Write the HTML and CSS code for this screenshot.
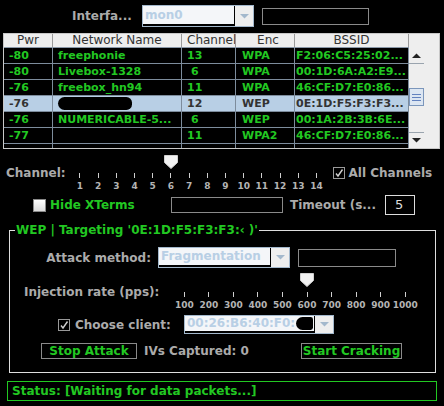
FILE: index.html
```html
<!DOCTYPE html>
<html>
<head>
<meta charset="utf-8">
<link rel="stylesheet" href="styles.css">
</head>
<body>
<div class="top">
  <span class="lbl-if">Interfa...</span>
  <div class="combo combo-if"><span class="editor">mon0</span><span class="arrow"><svg width="9" height="5" viewBox="0 0 9 5"><polygon points="0,0 9,0 4.5,4.5" fill="#a3b8cc"/></svg></span></div>
  <span class="field field-if"></span>
</div>

<div class="table">
  <div class="grid">
    <div class="head">
      <span class="h c1">Pwr</span><span class="h c2">Network Name</span><span class="h c3">Channel</span><span class="h c4">Enc</span><span class="h c5">BSSID</span>
    </div>
    <div class="body">
      <div class="row"><span class="c c1">-80</span><span class="c c2">freephonie</span><span class="c c3">13</span><span class="c c4">WPA</span><span class="c c5 mac">F2:06:C5:25:02...</span></div>
      <div class="row"><span class="c c1">-80</span><span class="c c2">Livebox-1328</span><span class="c c3 one">6</span><span class="c c4">WPA</span><span class="c c5 mac">00:1D:6A:A2:E9...</span></div>
      <div class="row"><span class="c c1">-76</span><span class="c c2">freebox_hn94</span><span class="c c3">11</span><span class="c c4">WPA</span><span class="c c5 mac">46:CF:D7:E0:86...</span></div>
      <div class="row sel"><span class="c c1">-76</span><span class="c c2"><span class="blob"></span></span><span class="c c3">12</span><span class="c c4">WEP</span><span class="c c5 mac">0E:1D:F5:F3:F3...</span></div>
      <div class="row"><span class="c c1">-76</span><span class="c c2">NUMERICABLE-5...</span><span class="c c3 one">6</span><span class="c c4">WEP</span><span class="c c5 mac">00:1A:2B:3B:6E...</span></div>
      <div class="row"><span class="c c1">-77</span><span class="c c2"></span><span class="c c3">11</span><span class="c c4">WPA2</span><span class="c c5 mac">46:CF:D7:E0:86...</span></div>
      <div class="row"><span class="c c1"></span><span class="c c2"></span><span class="c c3"></span><span class="c c4"></span><span class="c c5"></span></div>
    </div>
  </div>
  <div class="sbcol">
    <div class="sbhead"></div>
    <div class="sb">
      <div class="sb-up"><svg width="9" height="5" viewBox="0 0 9 5"><polygon points="0,5 9,5 4.5,0.5" fill="#222"/></svg></div>
      <div class="sb-track"><div class="sb-thumb"><i></i><i></i><i></i></div></div>
      <div class="sb-down"><svg width="9" height="5" viewBox="0 0 9 5"><polygon points="0,0 9,0 4.5,4.5" fill="#222"/></svg></div>
    </div>
  </div>
</div>

<div class="chan">
  <span class="chan-lbl">Channel:</span>
  <div class="slider s1">
    <div class="tk"><span class="slot"></span><span class="tick"></span><span class="tl">1</span></div>
    <div class="tk"><span class="slot"></span><span class="tick"></span><span class="tl">2</span></div>
    <div class="tk"><span class="slot"></span><span class="tick"></span><span class="tl">3</span></div>
    <div class="tk"><span class="slot"></span><span class="tick"></span><span class="tl">4</span></div>
    <div class="tk"><span class="slot"></span><span class="tick"></span><span class="tl">5</span></div>
    <div class="tk"><span class="slot"><svg class="thumb" width="14" height="14" viewBox="0 0 14 14"><polygon points="0.5,0.5 13.5,0.5 13.5,7.5 7,13.5 0.5,7.5" fill="#f2f2f2" stroke="#d0d0d0"/></svg></span><span class="tick"></span><span class="tl">6</span></div>
    <div class="tk"><span class="slot"></span><span class="tick"></span><span class="tl">7</span></div>
    <div class="tk"><span class="slot"></span><span class="tick"></span><span class="tl">8</span></div>
    <div class="tk"><span class="slot"></span><span class="tick"></span><span class="tl">9</span></div>
    <div class="tk"><span class="slot"></span><span class="tick"></span><span class="tl">10</span></div>
    <div class="tk"><span class="slot"></span><span class="tick"></span><span class="tl">11</span></div>
    <div class="tk"><span class="slot"></span><span class="tick"></span><span class="tl">12</span></div>
    <div class="tk"><span class="slot"></span><span class="tick"></span><span class="tl">13</span></div>
    <div class="tk"><span class="slot"></span><span class="tick"></span><span class="tl">14</span></div>
  </div>
  <div class="allch">
    <svg class="cb" width="12" height="12" viewBox="0 0 12 12"><rect x="0.5" y="0.5" width="11" height="11" fill="#000" stroke="#999"/><path d="M3 6.5 L5 9 L9.5 2.5" fill="none" stroke="#cfcfcf" stroke-width="1.4"/></svg>
    <span class="allch-lbl">All Channels</span>
  </div>
</div>

<div class="hide">
  <span class="cb-hide"></span>
  <span class="lbl-hide">Hide XTerms</span>
  <span class="field field-hide"></span>
  <span class="lbl-to">Timeout (s...</span>
  <span class="field field-to">5</span>
</div>

<fieldset class="wep">
  <legend class="legend">WEP | Targeting '0E:1D:F5:F3:F3:‹ )'</legend>
  <div class="am">
    <span class="lbl-am">Attack method:</span>
    <div class="combo combo-am"><span class="editor">Fragmentation</span><span class="arrow"><svg width="9" height="5" viewBox="0 0 9 5"><polygon points="0,0 9,0 4.5,4.5" fill="#a3b8cc"/></svg></span></div>
    <span class="field field-am"></span>
  </div>
  <div class="ir">
    <span class="lbl-ir">Injection rate (pps):</span>
    <div class="slider s2">
      <div class="tk"><span class="slot"></span><span class="tick"></span><span class="tl">100</span></div>
      <div class="tk"><span class="slot"></span><span class="tick"></span><span class="tl">200</span></div>
      <div class="tk"><span class="slot"></span><span class="tick"></span><span class="tl">300</span></div>
      <div class="tk"><span class="slot"></span><span class="tick"></span><span class="tl">400</span></div>
      <div class="tk"><span class="slot"></span><span class="tick"></span><span class="tl">500</span></div>
      <div class="tk"><span class="slot"><svg class="thumb" width="14" height="14" viewBox="0 0 14 14"><polygon points="0.5,0.5 13.5,0.5 13.5,7.5 7,13.5 0.5,7.5" fill="#f2f2f2" stroke="#d0d0d0"/></svg></span><span class="tick"></span><span class="tl">600</span></div>
      <div class="tk"><span class="slot"></span><span class="tick"></span><span class="tl">700</span></div>
      <div class="tk"><span class="slot"></span><span class="tick"></span><span class="tl">800</span></div>
      <div class="tk"><span class="slot"></span><span class="tick"></span><span class="tl">900</span></div>
      <div class="tk"><span class="slot"></span><span class="tick"></span><span class="tl">1000</span></div>
    </div>
  </div>
  <div class="cc">
    <svg class="cb cb-client" width="12" height="12" viewBox="0 0 12 12"><rect x="0.5" y="0.5" width="11" height="11" fill="#000" stroke="#999"/><path d="M3 6.5 L5 9 L9.5 2.5" fill="none" stroke="#cfcfcf" stroke-width="1.4"/></svg>
    <span class="lbl-cc">Choose client:</span>
    <div class="combo combo-cc"><span class="editor">00:26:B6:40:F0:<span class="blob2"></span></span><span class="arrow"><svg width="9" height="5" viewBox="0 0 9 5"><polygon points="0,0 9,0 4.5,4.5" fill="#a3b8cc"/></svg></span></div>
  </div>
  <div class="btns">
    <span class="btn btn-stop">Stop Attack</span>
    <span class="lbl-iv">IVs Captured: 0</span>
    <span class="btn btn-start">Start Cracking</span>
  </div>
</fieldset>

<div class="status">Status: [Waiting for data packets...]</div>
</body>
</html>
```

FILE: styles.css
```css
* { box-sizing: border-box; }
body {
  margin: 0;
  width: 444px;
  height: 406px;
  overflow: hidden;
  background: #000;
  font-family: "DejaVu Sans", sans-serif;
  font-weight: bold;
  font-size: 12px;
  color: #ababab;
}

/* top row */
.top { display: flex; align-items: center; height: 22px; margin-top: 5px; }
.lbl-if { margin-left: 72px; width: 70px; line-height: 14px; white-space: nowrap; }
.combo { display: flex; border: 1px solid #a3b8cc; background: #eeeeee; }
.combo-if { width: 112px; height: 22px; }
.editor {
  flex: 1;
  background: #f4f6f9;
  color: #b8cfe5;
  border-bottom: 2px solid #000;
  border-right: 1px solid #000;
  padding-left: 2px;
  line-height: 17px;
  white-space: nowrap;
  overflow: hidden;
  display: flex;
  align-items: center;
}
.arrow { width: 18px; display: flex; align-items: center; justify-content: center; }
.field { display: block; border: 1px solid #8a8a8a; background: #000; }
.field-if { margin-left: 8px; width: 107px; height: 17px; }

/* table */
.table { display: flex; margin: 6px 0 0 3px; width: 437px; height: 116px; border: 1px solid #c8c8c8; }
.grid { width: 405px; overflow: hidden; }
.head { display: flex; height: 14px; background: #eeeeee; border-bottom: 1px solid #8a98a8; }
.h {
  display: block;
  border-right: 1px solid #9a9a9a;
  text-align: center;
  font-weight: normal;
  font-size: 12px;
  color: #333;
  line-height: 13px;
  white-space: nowrap;
  overflow: hidden;
}
.c1 { width: 49px; }
.c2 { width: 129px; }
.c3 { width: 54px; }
.c4 { width: 59px; }
.c5 { width: 114px; }
.body { height: 100px; overflow: hidden; }
.row { display: flex; height: 16px; border-bottom: 1px solid #7d8c9c; }
.c {
  display: flex;
  align-items: center;
  border-right: 1px solid #7d8c9c;
  font-size: 11px;
  color: #22c822;
  line-height: 15px;
  white-space: nowrap;
  overflow: hidden;
  padding-left: 5px;
}
.c3 { padding-left: 5px; }
.c3.one { padding-left: 9px; }
.c4 { padding-left: 6px; }
.c5.mac { padding-left: 1px; }
.sel { background: #b8cfe5; }
.sel .c { color: #333; }
.blob { display: block; width: 74px; height: 13px; border-radius: 7px 6px 6px 7px; background: #000; }

/* scrollbar column */
.sbcol { width: 30px; background: #eeeeee; }
.sbhead { height: 14px; }
.sb { width: 15px; height: 100px; display: flex; flex-direction: column; }
.sb-up { height: 16px; flex: none; border-bottom: 1px solid #9aa4ae; display: flex; align-items: center; justify-content: center; }
.sb-track { height: 68px; flex: none; padding-top: 24px; }
.sb-thumb {
  height: 18px;
  border: 1px solid #7b96bb;
  background: #dce6f2;
  display: flex;
  flex-direction: column;
  justify-content: center;
  align-items: center;
  gap: 2px;
}
.sb-thumb i { display: block; width: 9px; height: 1px; background: #6382bf; }
.sb-down { height: 16px; flex: none; border-top: 1px solid #9aa4ae; display: flex; align-items: center; justify-content: center; }

/* channel slider */
.chan { display: flex; height: 40px; margin-top: 6px; }
.chan-lbl { margin: 11px 0 0 6px; width: 64.9px; line-height: 14px; }
.slider { display: flex; }
.tk { display: flex; flex-direction: column; align-items: center; }
.s1 .tk { width: 18.2px; }
.s2 .tk { width: 24.56px; }
.slot { height: 13px; width: 1px; display: flex; justify-content: center; }
.s2 .slot { height: 14px; }
.thumb { display: block; flex: none; }
.tick { display: block; width: 1px; height: 5px; background: #cfcfcf; margin-top: 5px; }
.tl { display: block; font-size: 9px; line-height: 11px; margin-top: 3px; white-space: nowrap; color: #b4b4b4; }
.allch { display: flex; align-items: center; height: 14px; margin: 11px 0 0 7px; }
.cb { display: block; flex: none; }
.allch-lbl { margin-left: 4px; white-space: nowrap; }

/* hide xterms row */
.hide { display: flex; align-items: center; height: 20px; }
.cb-hide {
  display: block;
  margin-left: 33px;
  width: 13px;
  height: 13px;
  border: 1px solid #8a8a8a;
  background: linear-gradient(#ffffff, #dcdcdc);
}
.lbl-hide { margin-left: 4px; width: 121px; color: #22c822; white-space: nowrap; }
.field-hide { width: 112px; height: 16px; }
.lbl-to { margin-left: 7px; width: 95px; white-space: nowrap; }
.field-to {
  width: 30px;
  height: 20px;
  border-color: #dddddd;
  color: #dddddd;
  font-weight: normal;
  font-size: 13px;
  line-height: 18px;
  padding-left: 9px;
}

/* WEP group */
.wep {
  margin: 8px 0 0 9px;
  width: 427px;
  padding: 0 0 13px 0;
  border: 1px solid #dedede;
  min-width: 0;
}
.legend { margin-left: 5px; padding: 0 1px; color: #22c822; line-height: 14px; white-space: nowrap; }
.am { display: flex; align-items: center; height: 21px; margin-top: 10px; }
.lbl-am { width: 141px; text-align: right; white-space: nowrap; }
.combo-am { margin-left: 7px; width: 132px; height: 21px; }
.field-am { margin-left: 8px; width: 98px; height: 18px; }
.ir { display: flex; height: 42px; margin-top: 5px; }
.lbl-ir { margin: 12px 0 0 14px; width: 148px; line-height: 14px; white-space: nowrap; }
.cc { display: flex; align-items: center; height: 19px; }
.cb-client { margin-left: 48px; }
.lbl-cc { margin-left: 5px; width: 109px; white-space: nowrap; }
.combo-cc { width: 150px; height: 19px; }
.combo-cc .editor { line-height: 15px; }
.blob2 { display: inline-block; width: 17px; height: 13px; margin-left: 1px; border-radius: 8px 3px 3px 8px; background: #000; }
.btns { display: flex; align-items: center; height: 16px; margin-top: 9px; }
.btn {
  display: block;
  height: 16px;
  border: 1px solid #8a8a8a;
  color: #22c822;
  text-align: center;
  line-height: 14px;
  white-space: nowrap;
}
.btn-stop { margin-left: 31px; width: 96px; }
.lbl-iv { margin-left: 7px; width: 157px; white-space: nowrap; }
.btn-start { width: 101px; }

/* status */
.status {
  margin: 8px 0 0 7px;
  width: 430px;
  height: 20px;
  border: 1px solid #22c822;
  color: #22c822;
  padding-left: 4px;
  line-height: 18px;
  white-space: nowrap;
}
```
